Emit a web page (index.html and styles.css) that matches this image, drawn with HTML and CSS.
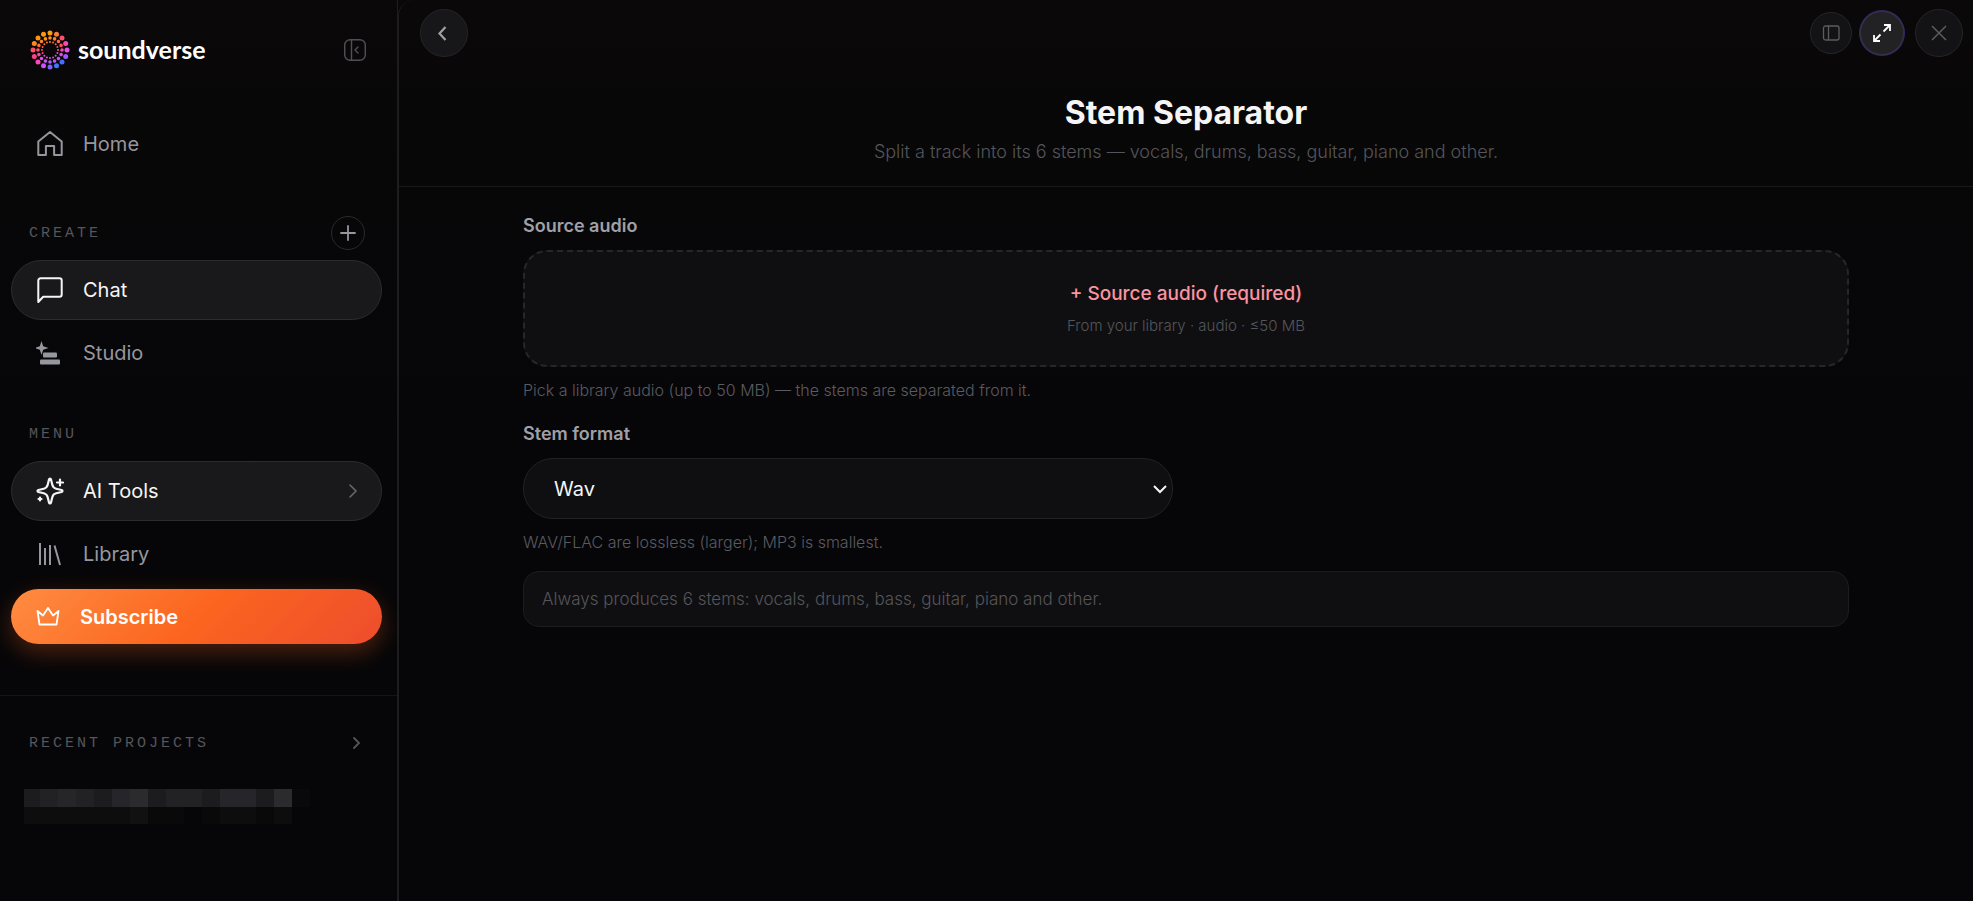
FILE: index.html
```
<!DOCTYPE html>
<html lang="en">
<head>
  <meta charset="UTF-8" />
  <meta name="viewport" content="width=device-width, initial-scale=1.0"/>
  <title>Stem Separator</title>
  <link rel="stylesheet" href="styles.css">
</head>
<body>
  <!-- Sidebar -->
  <aside class="sidebar">
    <div class="brand">
      <a href="#" class="logo">
        <svg width="40" height="40" viewBox="-20 -20 40 40" aria-hidden="true">
          <defs>
            <linearGradient id="ring" gradientUnits="userSpaceOnUse" x1="-3" y1="-13" x2="3" y2="13">
              <stop offset="0" stop-color="#ff9a0a"/>
              <stop offset="0.45" stop-color="#ff4a6c"/>
              <stop offset="0.7" stop-color="#f04be0"/>
              <stop offset="1" stop-color="#a45cff"/>
            </linearGradient>
          </defs>
          <circle cx="0" cy="-17" r="2.5" fill="#ff9a0a"/>
          <circle cx="6.5" cy="-15.7" r="2.5" fill="#ff7c36"/>
          <circle cx="12" cy="-12" r="2.5" fill="#ff4f6d"/>
          <circle cx="15.7" cy="-6.5" r="2.5" fill="#ff45b5"/>
          <circle cx="17" cy="0" r="2.5" fill="#f04bea"/>
          <circle cx="15.7" cy="6.5" r="2.5" fill="#9b59ff"/>
          <circle cx="12" cy="12" r="2.5" fill="#4a6cff"/>
          <circle cx="6.5" cy="15.7" r="2.5" fill="#3a7bff"/>
          <circle cx="0" cy="17" r="2.5" fill="#7a60ff"/>
          <circle cx="-6.5" cy="15.7" r="2.5" fill="#d050ff"/>
          <circle cx="-12" cy="12" r="2.5" fill="#ff45b8"/>
          <circle cx="-15.7" cy="6.5" r="2.5" fill="#ff4088"/>
          <circle cx="-17" cy="0" r="2.5" fill="#ff4a68"/>
          <circle cx="-15.7" cy="-6.5" r="2.5" fill="#ff8a1c"/>
          <circle cx="-12" cy="-12" r="2.5" fill="#ff9412"/>
          <circle cx="-6.5" cy="-15.7" r="2.5" fill="#ff970c"/>
          <circle r="12" fill="none" stroke="url(#ring)" stroke-width="3.6" stroke-linecap="round" pathLength="160" stroke-dasharray="0 10"/>
          <circle r="8" fill="none" stroke="url(#ring)" stroke-width="2" stroke-linecap="round" pathLength="160" stroke-dasharray="0 10"/>
        </svg>
        <span>soundverse</span>
      </a>
      <button class="icon-btn" aria-label="Collapse sidebar">
        <svg width="24" height="24" viewBox="0 0 24 24" fill="none" stroke="currentColor" stroke-width="1.4" stroke-linecap="round" stroke-linejoin="round"><rect x="1.7" y="1.7" width="20.6" height="20.6" rx="5.5"/><path d="M8.5 2v20M15 9l-3 3 3 3"/></svg>
      </button>
    </div>

    <nav class="nav">
      <a href="#" class="nav-item">
        <svg class="nav-icon" viewBox="0 0 28 28" fill="none" stroke="currentColor" stroke-width="2" stroke-linejoin="round"><path d="M2.3 11.5 14 2l11.7 9.5V25h-7.6v-9h-8.2v9H2.3z"/></svg>
        Home
      </a>
    </nav>

    <div class="section-head">
      <span>CREATE</span>
      <button class="add-btn" aria-label="Create">
        <svg width="16" height="16" viewBox="0 0 16 16" stroke="currentColor" stroke-width="1.8" stroke-linecap="round"><path d="M8 1v14M1 8h14"/></svg>
      </button>
    </div>
    <nav class="nav">
      <a href="#" class="nav-item active">
        <svg class="nav-icon" viewBox="0 0 28 28" fill="none" stroke="currentColor" stroke-width="2" stroke-linejoin="round"><path d="M2.3 26V4.5a2.2 2.2 0 0 1 2.2-2.2h19a2.2 2.2 0 0 1 2.2 2.2v14a2.2 2.2 0 0 1-2.2 2.2H7.2z"/></svg>
        Chat
      </a>
      <a href="#" class="nav-item">
        <svg class="nav-icon" viewBox="0 0 28 28" fill="currentColor"><path d="M5.5 2 7.200 7.300 12.500 9 7.200 10.700 5.500 16 3.800 10.700-1.500 9l5.300-1.700z"/><rect x="7" y="13.500" width="14" height="5" rx="1"/><rect x="4" y="20.500" width="20" height="5" rx="1"/></svg>
        Studio
      </a>
    </nav>

    <div class="section-head">
      <span>MENU</span>
    </div>
    <nav class="nav">
      <a href="#" class="nav-item active">
        <svg class="nav-icon" viewBox="0 0 28 28" fill="none" stroke="currentColor" stroke-width="2.2" stroke-linecap="round" stroke-linejoin="round"><path d="M14 1.500c.5 0 .8.3 1 .9l1.300 5.400c.5 2 1.800 3.400 3.900 3.900l5.400 1.300c1.200.4 1.200 1.600 0 2l-5.400 1.300c-2.100.5-3.400 1.900-3.900 3.900l-1.300 5.400c-.4 1.200-1.600 1.200-2 0l-1.300-5.400c-.5-2-1.800-3.400-3.900-3.900L2.400 15c-1.200-.4-1.200-1.600 0-2l5.400-1.300c2.100-.5 3.400-1.900 3.900-3.900L13 2.400c.2-.6.5-.9 1-.9zM24 2.500v6M21 5.500h6M4 20.500v3M2.500 22h3"/></svg>
        AI Tools
        <svg class="arrow" width="16" height="16" viewBox="0 0 16 16" fill="none" stroke="currentColor" stroke-width="1.5" stroke-linecap="round"><path d="m5 2 6 6-6 6"/></svg>
      </a>
      <a href="#" class="nav-item">
        <svg class="nav-icon" viewBox="0 0 28 28" fill="none" stroke="currentColor" stroke-width="2"><path d="M4 3v22M9 8v17M14 5v20M18.500 5.500 24 25"/></svg>
        Library
      </a>
    </nav>
    <button class="subscribe">
      <svg width="26" height="26" viewBox="0 0 26 26" fill="none" stroke="currentColor" stroke-width="1.8" stroke-linejoin="round"><path d="m1.500 7 5.500 4.500 5-7.500 5 7.500L22.500 7l-2 13.500h-17z"/></svg>
      Subscribe
    </button>

    <section class="recent">
      <a href="#" class="section-head">
        <span>RECENT PROJECTS</span>
        <svg width="16" height="16" viewBox="0 0 16 16" fill="none" stroke="currentColor" stroke-width="1.8" stroke-linecap="round"><path d="m5 3 5 5-5 5"/></svg>
      </a>
      <svg class="redacted" width="286" height="35" viewBox="0 0 286 35" shape-rendering="crispEdges" aria-hidden="true">
        <path fill="#1c1c1e" d="M0 0h16v18H0zM70 0h18v18H70zM124 0h18v18h-18zM178 0h18v18h-18zM232 0h18v18h-18z"/>
        <path fill="#222224" d="M16 0h18v18H16zM52 0h18v18H52zM142 0h36v18h-36z"/>
        <path fill="#25252a" d="M34 0h18v18H34zM88 0h18v18H88zM196 0h36v18h-36z"/>
        <path fill="#2b2b2d" d="M106 0h18v18h-18zM250 0h18v18h-18z"/>
        <path fill="#0d0d0e" d="M0 18h106v17H0zM196 18h36v17h-36zM250 18h18v17h-18z"/>
        <path fill="#111112" d="M106 18h18v17h-18z"/>
        <path fill="#09090a" d="M124 18h36v17h-36zM178 18h18v17h-18zM232 18h18v17h-18zM268 0h18v18h-18z"/>
      </svg>
    </section>
  </aside>

  <!-- Tool panel -->
  <main class="panel">
    <header class="panel-header">
      <div class="toolbar">
        <button class="round-btn back" aria-label="Back">
          <svg width="20" height="20" viewBox="0 0 20 20" fill="none" stroke="currentColor" stroke-width="2.2"><path d="m11.500 4-6 6.500 6 6.500"/></svg>
        </button>
        <div class="window-btns">
          <button class="round-btn small" aria-label="Split view">
            <svg width="18" height="18" viewBox="0 0 18 18" fill="none" stroke="currentColor" stroke-width="1.3"><rect x="1.500" y="2" width="15.500" height="14" rx="2"/><path d="M6.500 2v14"/></svg>
          </button>
          <button class="round-btn current" aria-label="Expand">
            <svg width="20" height="20" viewBox="0 0 20 20" fill="none" stroke="currentColor" stroke-width="1.8"><path d="M11.500 8.500 17.500 2.500M12 2h6v6M8.500 11.500l-6 6M2 12v6h6"/></svg>
          </button>
          <button class="round-btn" aria-label="Close">
            <svg width="18" height="18" viewBox="0 0 18 18" stroke="currentColor" stroke-width="1.5"><path d="m2 2 14 14M16 2 2 16"/></svg>
          </button>
        </div>
      </div>
      <h1>Stem Separator</h1>
      <p>Split a track into its 6 stems — vocals, drums, bass, guitar, piano and other.</p>
    </header>

    <form class="tool-form">
      <h2 class="label">Source audio</h2>
      <button type="button" class="dropzone">
        <span class="drop-title">+ Source audio (required)</span>
        <span class="drop-sub">From your library · audio · ≤50 MB</span>
      </button>
      <p class="hint">Pick a library audio (up to 50 MB) — the stems are separated from it.</p>

      <label class="label" for="format">Stem format</label>
      <div class="select-wrap">
        <select id="format">
          <option>Wav</option>
          <option>Flac</option>
          <option>Mp3</option>
        </select>
        <svg width="16" height="16" viewBox="0 0 16 16" fill="none" stroke="currentColor" stroke-width="2"><path d="m2 5 6 6 6-6"/></svg>
      </div>
      <p class="hint">WAV/FLAC are lossless (larger); MP3 is smallest.</p>

      <p class="note">Always produces 6 stems: vocals, drums, bass, guitar, piano and other.</p>
    </form>
  </main>
</body>
</html>
```
FILE: styles.css
```
* {
  box-sizing: border-box;
  margin: 0;
  padding: 0;
}
body {
  display: flex;
  min-height: 100vh;
  font-family: Inter, sans-serif;
  font-size: 20px;
  color: #f5f5f5;
  background: linear-gradient(#0a0809, #070708 200px, #060608 500px);
}
button, select {
  font: inherit;
  color: inherit;
  cursor: pointer;
}
a {
  color: inherit;
  text-decoration: none;
}
svg {
  flex-shrink: 0;
}

/* Sidebar */
.sidebar {
  width: 398px;
  flex-shrink: 0;
  display: flex;
  flex-direction: column;
  border-right: 1px solid #1d1d1f;
}
.brand {
  display: flex;
  justify-content: space-between;
  align-items: center;
  height: 100px;
  padding: 0 30px;
}
.logo {
  display: flex;
  align-items: center;
  gap: 8px;
  font-family: Lato, sans-serif;
  font-size: 25px;
  line-height: 28px;
  font-weight: 700;
  color: #fff;
}
.logo span {
  padding-bottom: 3px;
}
.icon-btn {
  display: flex;
  border: none;
  background: none;
  color: #505056;
}
.nav {
  padding: 0 15px 0 11px;
}
.brand + .nav {
  padding-top: 14px;
}
.nav-item {
  display: flex;
  align-items: center;
  gap: 19px;
  height: 60px;
  padding: 0 20px 0 24px;
  border: 1px solid transparent;
  border-radius: 30px;
  color: #96969e;
  margin-bottom: 3px;
}
.nav-item.active {
  background: #19191b;
  border-color: #2c2c2f;
  color: #f5f5f5;
}
.nav-icon {
  width: 28px;
  height: 28px;
}
.arrow {
  margin-left: auto;
  color: #68686e;
}
.section-head {
  display: flex;
  justify-content: space-between;
  align-items: center;
  height: 34px;
  padding: 0 32px 0 29px;
  margin-top: 39px;
  margin-bottom: 10px;
  font-family: "Liberation Mono", monospace;
  font-size: 15px;
  letter-spacing: 3px;
  color: #55555a;
}
.nav + .section-head + .nav + .section-head {
  margin-top: 31px;
}
.add-btn {
  display: flex;
  align-items: center;
  justify-content: center;
  width: 34px;
  height: 34px;
  border: 1px solid #2a2a2d;
  border-radius: 50%;
  background: none;
  color: #96969e;
}
.subscribe {
  display: flex;
  align-items: center;
  gap: 18px;
  height: 55px;
  margin: 2px 15px 51px 11px;
  padding: 0 25px;
  border: none;
  border-radius: 28px;
  background: linear-gradient(135deg, #ff8c42, #fb651f 50%, #ed4d2d);
  box-shadow: 0 8px 24px rgba(251, 101, 31, 0.3);
  color: #fff;
  font-weight: 600;
}
.recent {
  border-top: 1px solid #151517;
}
.recent .section-head {
  margin: 30px 0 29px;
}
.redacted {
  display: block;
  margin-left: 24px;
}

/* Tool panel */
.panel {
  flex: 1;
  border-left: 1px solid #1d1d1f;
  border-top-left-radius: 16px;
}
.panel-header {
  padding: 9px 0 20px;
  border-bottom: 1px solid #19191b;
  text-align: center;
}
.toolbar {
  display: flex;
  justify-content: space-between;
  padding: 0 10px 0 21px;
  margin-bottom: 36px;
}
.window-btns {
  display: flex;
  align-items: center;
  gap: 8px;
}
.round-btn {
  display: flex;
  align-items: center;
  justify-content: center;
  width: 48px;
  height: 48px;
  border: 1px solid #252527;
  border-radius: 50%;
  background: #131315;
  color: #5c5c60;
}
.round-btn.back {
  background: #171618;
  color: #a0a0a8;
}
.round-btn.small {
  width: 42px;
  height: 42px;
}
.round-btn.current {
  width: 44px;
  height: 44px;
  margin-right: 3px;
  background: #222224;
  border-color: #343438;
  box-shadow: 0 0 0 1px #33286b;
  color: #fff;
}
.panel-header h1 {
  font-size: 32px;
  line-height: 40px;
  font-weight: 700;
}
.panel-header p {
  margin-top: 5px;
  font-size: 18px;
  line-height: 28px;
  font-weight: 300;
  color: #55555a;
}
.tool-form {
  max-width: 1366px;
  margin: 0 auto;
  padding: 25px 20px 40px;
}
.label {
  display: block;
  font-size: 18px;
  line-height: 28px;
  font-weight: 600;
  color: #a0a0a8;
  margin-bottom: 10px;
}
.dropzone {
  display: flex;
  flex-direction: column;
  align-items: center;
  justify-content: center;
  gap: 6px;
  width: 100%;
  height: 117px;
  border: 2px dashed #27272a;
  border-radius: 24px;
  background: #0f0f11;
}
.drop-title {
  font-size: 19px;
  line-height: 28px;
  font-weight: 500;
  color: #fb94a0;
}
.drop-sub {
  font-size: 15px;
  line-height: 24px;
  font-weight: 300;
  color: #55555a;
}
.hint {
  margin: 11px 0 18px;
  font-size: 16px;
  line-height: 24px;
  font-weight: 300;
  color: #5a5a60;
}
.select-wrap {
  display: grid;
  align-items: center;
  width: 49%;
}
.select-wrap select {
  grid-area: 1 / 1;
  width: 100%;
  height: 61px;
  padding: 0 30px;
  appearance: none;
  border: 1px solid #222225;
  border-radius: 30px;
  background: #0f0f11;
}
.select-wrap svg {
  grid-area: 1 / 1;
  justify-self: end;
  margin-right: 5px;
  pointer-events: none;
}
.select-wrap + .hint {
  margin-bottom: 17px;
}
.note {
  padding: 14px 18px;
  border: 1px solid #1c1c1e;
  border-radius: 16px;
  background: #0f0f11;
  font-size: 17px;
  line-height: 26px;
  font-weight: 300;
  color: #55555a;
}
```
